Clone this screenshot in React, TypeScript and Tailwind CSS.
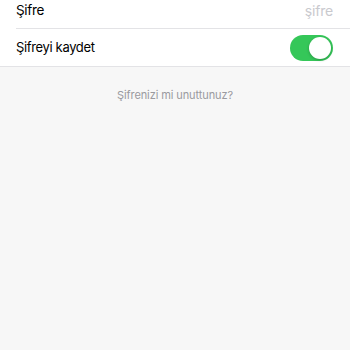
import React, { useState } from 'react';

export default function App() {
  const [save, setSave] = useState(true);

  return (
    <div
      className="w-[350px] h-[350px] overflow-hidden bg-[#f7f7f7]"
      style={{ fontFamily: 'Inter, "Liberation Sans", sans-serif' }}
    >
      <div className="-mt-[8px] bg-white border-b border-[#e3e3e6]">
        <div className="pl-4">
          <div className="h-[37px] flex items-center justify-between pr-[17px] border-b border-[#e3e3e6]">
            <span className="text-[13.5px] tracking-[-0.3px] text-black">Şifre</span>
            <input
              type="password"
              placeholder="şifre"
              className="w-[120px] text-right text-[14px] tracking-[-0.2px] bg-transparent outline-none placeholder:text-[#c9c9ce]"
            />
          </div>
          <div className="h-[37px] flex items-center justify-between pr-[17px]">
            <span className="text-[13px] tracking-[-0.35px] text-black">Şifreyi kaydet</span>
            <button
              onClick={() => setSave(!save)}
              className={
                'relative w-[43px] h-[26px] rounded-full transition-colors ' +
                (save ? 'bg-[#35c759]' : 'bg-[#e5e5ea]')
              }
            >
              <span
                className={
                  'absolute top-[2px] w-[22px] h-[22px] rounded-full bg-white shadow-[0_1px_3px_rgba(0,0,0,0.25)] transition-all ' +
                  (save ? 'left-[19px]' : 'left-[2px]')
                }
              />
            </button>
          </div>
        </div>
      </div>
      <div className="pt-[14px] text-center">
        <span className="text-[11px] tracking-[-0.1px] text-[#9a9a9f]">Şifrenizi mi unuttunuz?</span>
      </div>
    </div>
  );
}
